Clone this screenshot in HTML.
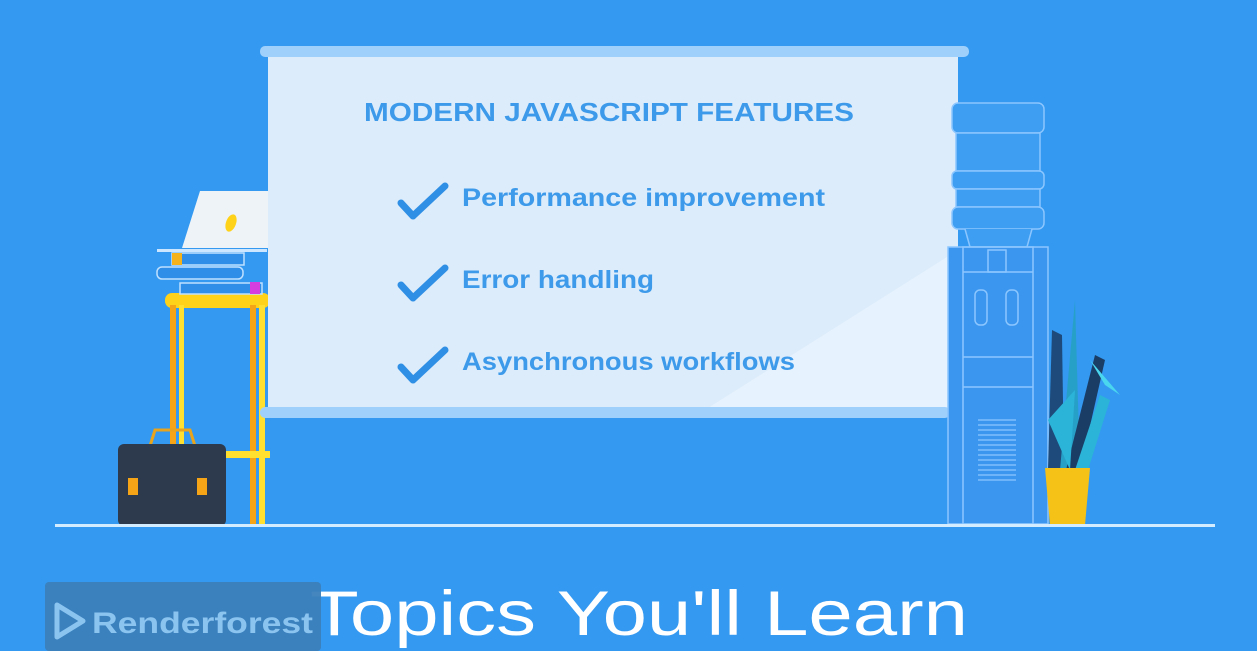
<!DOCTYPE html>
<html><head><meta charset="utf-8"><style>
html,body{margin:0;padding:0;overflow:hidden;background:#3399f1;}
svg{display:block}
text{font-family:"Liberation Sans",sans-serif}
</style></head><body>
<svg width="1257" height="651" viewBox="0 0 1257 651" xmlns="http://www.w3.org/2000/svg">
<rect width="1257" height="651" fill="#3399f1"/>
<!-- stool -->
<rect x="165" y="293" width="105" height="15" rx="7" fill="#ffd21a"/>
<rect x="170" y="305" width="6" height="220" fill="#f5a418"/>
<rect x="179" y="305" width="5" height="220" fill="#ffe030"/>
<rect x="250" y="305" width="6" height="220" fill="#f5a418"/>
<rect x="259" y="305" width="6" height="220" fill="#ffe030"/>
<rect x="225" y="451" width="45" height="7" fill="#ffe030"/>
<!-- books -->
<rect x="180" y="283" width="82" height="11" fill="#2f8ee8" stroke="#bfe0ff" stroke-width="1.5"/>
<rect x="250" y="282" width="10" height="12" fill="#d63ee0"/>
<rect x="157" y="267" width="86" height="12" rx="5" fill="#2f8ee8" stroke="#bfe0ff" stroke-width="1.5"/>
<rect x="172" y="253" width="72" height="12" fill="#2f8ee8" stroke="#bfe0ff" stroke-width="1.5"/>
<rect x="172" y="253" width="10" height="12" fill="#f5b21a"/>
<rect x="157" y="249" width="110" height="3" fill="#cde6ff"/>
<!-- laptop -->
<path d="M200 191 L268 191 L268 248 L182 248 Z" fill="#eef3f8"/>
<ellipse cx="231" cy="223" rx="5" ry="9" fill="#ffd21a" transform="rotate(20 231 223)"/>
<!-- briefcase -->
<path d="M150 446 L155 430 L190 430 L195 446" fill="none" stroke="#e8a41c" stroke-width="3"/>
<rect x="118" y="444" width="108" height="82" rx="6" fill="#2d3a4d"/>
<rect x="128" y="478" width="10" height="17" fill="#f5a418"/>
<rect x="197" y="478" width="10" height="17" fill="#f5a418"/>
<!-- board -->
<rect x="268" y="55" width="690" height="358" fill="#dcecfb"/>
<path d="M700 413 L958 250 L958 413 Z" fill="#e6f2fd"/>
<rect x="260" y="46" width="709" height="11" rx="5" fill="#9fd0fb"/>
<rect x="260" y="407" width="690" height="11" rx="5" fill="#9fd0fb"/>
<g fill="#3d9aea" font-weight="bold">
<text x="364" y="121" font-size="25.5" textLength="490" lengthAdjust="spacingAndGlyphs">MODERN JAVASCRIPT FEATURES</text>
<text x="462" y="206" font-size="25" textLength="363" lengthAdjust="spacingAndGlyphs">Performance improvement</text>
<text x="462" y="288" font-size="25" textLength="192" lengthAdjust="spacingAndGlyphs">Error handling</text>
<text x="462" y="370" font-size="25" textLength="333" lengthAdjust="spacingAndGlyphs">Asynchronous workflows</text>
</g>
<g fill="none" stroke="#2f8fe5" stroke-width="7" stroke-linecap="round" stroke-linejoin="round">
<path d="M401 203 L413 216 L445 186"/>
<path d="M401 285 L413 298 L445 268"/>
<path d="M401 367 L413 380 L445 350"/>
</g>
<!-- water cooler -->
<g fill="none" stroke="#8cc6ff" stroke-width="1.5">
<rect x="952" y="103" width="92" height="30" rx="6" fill="#3d9ef2"/>
<rect x="956" y="133" width="84" height="38" fill="#3d9ef2"/>
<rect x="952" y="171" width="92" height="18" rx="5" fill="#3d9ef2"/>
<rect x="956" y="189" width="84" height="18" fill="#3d9ef2"/>
<rect x="952" y="207" width="92" height="22" rx="6" fill="#3d9ef2"/>
<path d="M965 229 L970 247 L1027 247 L1032 229" fill="#3d9ef2"/>
<rect x="948" y="247" width="100" height="277" fill="#3a96ee"/>
<rect x="963" y="247" width="70" height="277"/>
<rect x="988" y="250" width="18" height="22"/>
<line x1="963" y1="272" x2="1033" y2="272"/>
<line x1="963" y1="357" x2="1033" y2="357"/>
<line x1="963" y1="387" x2="1033" y2="387"/>
<rect x="975" y="290" width="12" height="35" rx="5"/>
<rect x="1006" y="290" width="12" height="35" rx="5"/>
</g>
<g stroke="#8cc6ff" stroke-width="1.2">
<line x1="978" y1="420" x2="1016" y2="420"/><line x1="978" y1="425" x2="1016" y2="425"/><line x1="978" y1="430" x2="1016" y2="430"/><line x1="978" y1="435" x2="1016" y2="435"/><line x1="978" y1="440" x2="1016" y2="440"/><line x1="978" y1="445" x2="1016" y2="445"/><line x1="978" y1="450" x2="1016" y2="450"/><line x1="978" y1="455" x2="1016" y2="455"/><line x1="978" y1="460" x2="1016" y2="460"/><line x1="978" y1="465" x2="1016" y2="465"/><line x1="978" y1="470" x2="1016" y2="470"/><line x1="978" y1="475" x2="1016" y2="475"/><line x1="978" y1="480" x2="1016" y2="480"/>
</g>
<!-- plant -->
<path d="M1048 470 L1052 330 L1062 335 L1064 470 Z" fill="#1d4a7a"/>
<path d="M1060 470 L1075 300 L1080 470 Z" fill="#27a0c8"/>
<path d="M1066 470 L1095 355 L1105 360 L1080 470 Z" fill="#1a3d66"/>
<path d="M1075 470 L1100 395 L1110 400 L1088 470 Z" fill="#2bb4d8"/>
<path d="M1090 360 L1120 395 L1105 385 Z" fill="#49d6ee"/>
<path d="M1048 420 L1075 390 L1070 470 Z" fill="#2bb4d8"/>
<path d="M1045 468 L1090 468 L1085 525 L1050 525 Z" fill="#f5c217"/>
<!-- floor -->
<rect x="55" y="524" width="1160" height="3" fill="#d4ecff"/>
<!-- bottom -->
<text x="310" y="635" font-size="63" fill="#ffffff" textLength="658" lengthAdjust="spacingAndGlyphs">Topics You'll Learn</text>
<rect x="45" y="582" width="276" height="69" rx="4" fill="#3b7fba" opacity="0.95"/>
<path d="M57 605 L83 621 L57 637 Z" fill="none" stroke="#8cc4f0" stroke-width="5" stroke-linejoin="round"/>
<text x="92" y="633" font-size="30" font-weight="bold" fill="#8cc4f0" textLength="221" lengthAdjust="spacingAndGlyphs">Renderforest</text>
</svg>
</body></html>
